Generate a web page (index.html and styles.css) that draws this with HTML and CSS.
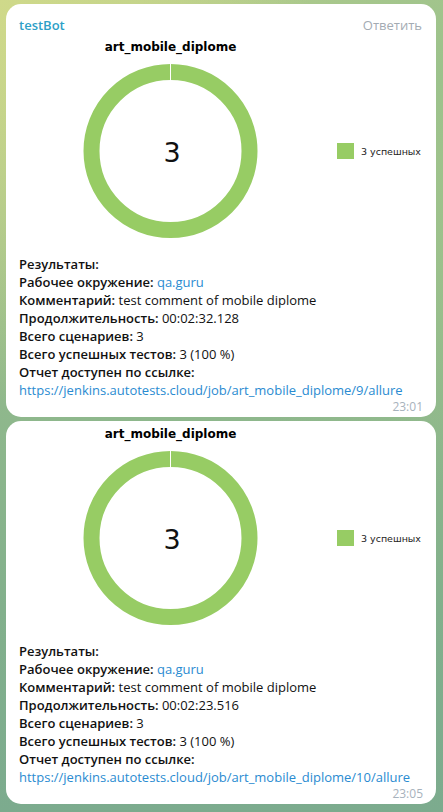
FILE: index.html
```html
<!DOCTYPE html>
<html lang="ru">
<head>
<meta charset="utf-8">
<title>testBot</title>
<link rel="stylesheet" href="styles.css">
</head>
<body>
<div class="chat">
  <div class="bubble">
    <div class="head"><span class="name">testBot</span><span class="reply">Ответить</span></div>
    <svg class="chart" width="430" height="221" viewBox="0 0 430 221">
      <text class="ttl" x="164.5" y="16.5" text-anchor="middle">art_mobile_diplome</text>
      <circle cx="164.5" cy="117" r="79" fill="none" stroke="#97cc64" stroke-width="16"/>
      <line x1="164.5" y1="29" x2="164.5" y2="47" stroke="#fff" stroke-width="1"/>
      <text class="num" x="166" y="128" text-anchor="middle">3</text>
      <rect x="331" y="109" width="17" height="16" fill="#97cc64"/>
      <text class="leg" x="355" y="121">3 успешных</text>
    </svg>
    <div class="text">
      <div><b>Результаты:</b></div>
      <div><b>Рабочее окружение:</b> <a>qa.guru</a></div>
      <div><b>Комментарий:</b> test comment of mobile diplome</div>
      <div><b>Продолжительность:</b> 00:02:32.128</div>
      <div><b>Всего сценариев:</b> 3</div>
      <div><b>Всего успешных тестов:</b> 3 (100 %)</div>
      <div><b>Отчет доступен по ссылке:</b></div>
      <div><a>https://jenkins.autotests.cloud/job/art_mobile_diplome/9/allure</a></div>
    </div>
    <div class="time">23:01</div>
  </div>
  <div class="bubble">
    <svg class="chart" width="430" height="221" viewBox="0 0 430 221">
      <text class="ttl" x="164.5" y="16.5" text-anchor="middle">art_mobile_diplome</text>
      <circle cx="164.5" cy="117" r="79" fill="none" stroke="#97cc64" stroke-width="16"/>
      <line x1="164.5" y1="29" x2="164.5" y2="47" stroke="#fff" stroke-width="1"/>
      <text class="num" x="166" y="128" text-anchor="middle">3</text>
      <rect x="331" y="109" width="17" height="16" fill="#97cc64"/>
      <text class="leg" x="355" y="121">3 успешных</text>
    </svg>
    <div class="text">
      <div><b>Результаты:</b></div>
      <div><b>Рабочее окружение:</b> <a>qa.guru</a></div>
      <div><b>Комментарий:</b> test comment of mobile diplome</div>
      <div><b>Продолжительность:</b> 00:02:23.516</div>
      <div><b>Всего сценариев:</b> 3</div>
      <div><b>Всего успешных тестов:</b> 3 (100 %)</div>
      <div><b>Отчет доступен по ссылке:</b></div>
      <div><a>https://jenkins.autotests.cloud/job/art_mobile_diplome/10/allure</a></div>
    </div>
    <div class="time">23:05</div>
  </div>
</div>
</body>
</html>
```
FILE: styles.css
```css
html, body {
  margin: 0;
  padding: 0;
  height: 100%;
}
body {
  font-family: "Open Sans", "Noto Sans", sans-serif;
  font-size: 13px;
  color: #111;
  background:
    radial-gradient(ellipse 70% 50% at 0% 0%, #cfd98a 0%, rgba(207,217,138,0) 100%),
    radial-gradient(ellipse 70% 50% at 100% 10%, #9cc28c 0%, rgba(156,194,140,0) 100%),
    linear-gradient(180deg, #b9cf8c 0%, #94bb8c 40%, #82b08c 75%, #7cab8e 100%);
  overflow: hidden;
}
.chat {
  display: flex;
  flex-direction: column;
  gap: 4px;
  padding: 4px 7px 0 6px;
}
.bubble {
  width: 430px;
  background: #fff;
  border-radius: 15px;
  display: flex;
  flex-direction: column;
}
.head {
  display: flex;
  justify-content: space-between;
  padding: 12px 14px 0 13px;
  line-height: 18px;
}
.name {
  color: #2d9fc7;
  font-weight: 600;
  font-size: 13px;
}
.reply {
  color: #a3abb3;
  font-size: 13px;
}
.chart {
  display: block;
}
.ttl {
  font-family: "DejaVu Sans", sans-serif;
  font-weight: bold;
  font-size: 12px;
  fill: #000;
}
.num {
  font-family: "DejaVu Sans", sans-serif;
  font-size: 27px;
  fill: #111;
}
.leg {
  font-family: "DejaVu Sans", sans-serif;
  font-size: 9.5px;
  fill: #222;
}
.text {
  padding: 0 13px;
  line-height: 18px;
}
.text b {
  font-weight: 600;
}
.text a {
  color: #2a8bd1;
}
.time {
  align-self: flex-end;
  padding: 1px 13px 3px 0;
  line-height: 14px;
  font-size: 12px;
  color: #a7b2bc;
}
```
